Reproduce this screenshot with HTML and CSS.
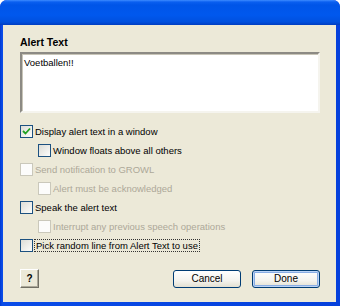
FILE: index.html
```html
<!DOCTYPE html>
<html lang="en">

<head>
    <meta charset="UTF-8" />
    <title>Alert Text</title>
    <link rel="stylesheet" href="styles.css">
</head>

<body>
    <div class="window">
        <div class="titlebar"></div>
        <div class="frame">
            <div class="content">
                <div class="label">Alert Text</div>
                <div class="textbox">Voetballen!!</div>

                <div class="options">
                    <div class="row">
                        <span class="box checked">
                            <svg viewBox="0 0 9 9"><path d="M1 4 L3.5 6.5 L8 1.5" /></svg>
                        </span>
                        <span>Display alert text in a window</span>
                    </div>
                    <div class="row sub">
                        <span class="box"></span>
                        <span>Window floats above all others</span>
                    </div>
                    <div class="row off">
                        <span class="box"></span>
                        <span>Send notification to GROWL</span>
                    </div>
                    <div class="row sub off">
                        <span class="box"></span>
                        <span>Alert must be acknowledged</span>
                    </div>
                    <div class="row">
                        <span class="box"></span>
                        <span>Speak the alert text</span>
                    </div>
                    <div class="row sub off">
                        <span class="box"></span>
                        <span>Interrupt any previous speech operations</span>
                    </div>
                    <div class="row">
                        <span class="box"></span>
                        <span class="focus">Pick random line from Alert Text to use</span>
                    </div>
                </div>

                <div class="buttons">
                    <button class="help">?</button>
                    <div class="spacer"></div>
                    <button class="btn">Cancel</button>
                    <button class="btn default">Done</button>
                </div>
            </div>
        </div>
    </div>
</body>

</html>
```

FILE: styles.css
```css
html,
body {
    margin: 0;
    padding: 0;
    background: white;
    font-family: Tahoma, "Liberation Sans", sans-serif;
    font-size: 9.5px;
    color: black;
}

.window {
    width: 340px;
    height: 306px;
    display: flex;
    flex-direction: column;
    background: #0831d9;
    border-radius: 7px 7px 0 0;
    overflow: hidden;
}

.titlebar {
    height: 25px;
    background: linear-gradient(to bottom, #3d8cff 0%, #0a5ff0 8%, #0055e8 20%, #0058ee 60%, #0050de 88%, #003dc0 100%);
}

.frame {
    flex: 1;
    display: flex;
    padding: 0 4px 4px 3px;
    background: linear-gradient(to right, #0038d0, #0a4ce8 2px, #0540dc);
}

.content {
    flex: 1;
    background: #ece9d8;
    padding: 11px 16px 0 17px;
    display: flex;
    flex-direction: column;
}

.label {
    font-weight: bold;
    font-size: 10.5px;
    height: 16px;
    line-height: 13px;
}

.textbox {
    height: 53px;
    background: white;
    border: 2px solid;
    border-color: #8c8a84 #f5f4ee #f5f4ee #8c8a84;
    box-shadow: inset 1px 1px 0 #c8c5b8;
    padding: 2px;
    line-height: 13px;
}

.options {
    margin-top: 9px;
    display: flex;
    flex-direction: column;
}

.row {
    height: 19px;
    display: flex;
    align-items: center;
    gap: 2px;
}

.row.sub {
    padding-left: 18px;
}

.box {
    width: 11px;
    height: 11px;
    border: 1px solid #1c5180;
    background: linear-gradient(135deg, #dcdcd6, #fdfdfb);
    display: flex;
    align-items: center;
    justify-content: center;
    flex-shrink: 0;
}

.box svg {
    width: 9px;
    height: 9px;
}

.box svg path {
    fill: none;
    stroke: #21a121;
    stroke-width: 1.8;
}

.row.off {
    color: #aca899;
}

.row.off .box {
    border-color: #cac8bb;
    background: #fcfcfb;
}

.focus {
    outline: 1px dotted #333;
    outline-offset: 0;
    padding: 0 1px;
}

.buttons {
    margin-top: 14px;
    display: flex;
    align-items: center;
    gap: 11px;
}

.spacer {
    flex: 1;
}

.help {
    width: 19px;
    height: 19px;
    padding: 0;
    font-family: inherit;
    font-size: 10px;
    font-weight: bold;
    background: #ece9d8;
    border: 1px solid;
    border-color: #fff #716f64 #716f64 #fff;
    box-shadow: inset -1px -1px 0 #aca899;
}

.btn {
    width: 68px;
    height: 18px;
    padding: 0;
    font-family: inherit;
    font-size: 10px;
    color: black;
    border: 1px solid #003c74;
    border-radius: 3px;
    background: linear-gradient(to bottom, #ffffff 0%, #f4f3ee 60%, #e3e0d2 100%);
}

.btn.default {
    box-shadow: inset 0 0 0 1px #bcd4f6, inset 0 0 0 2px #89ade4;
}
```
